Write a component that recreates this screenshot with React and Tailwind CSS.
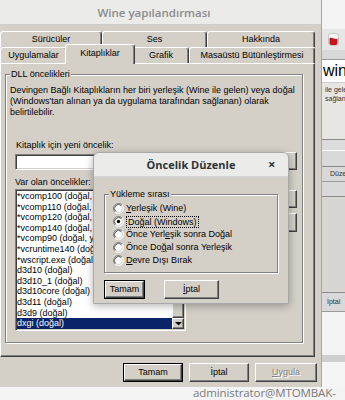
import React from "react";

const RAISED =
  "border-t border-l border-r border-b border-t-white border-l-white border-r-[#404040] border-b-[#404040] shadow-[inset_-1px_-1px_0_#808080]";
const SUNKEN =
  "border border-t-[#808080] border-l-[#808080] border-r-white border-b-white shadow-[inset_1px_1px_0_#404040,inset_-1px_-1px_0_#d4d0c8]";

function Btn({ children, className = "", def = false, disabled = false }) {
  return (
    <div className={`bg-[#d4d0c8] ${def ? "border border-black" : ""} ${className}`}>
      <div className={`w-full h-full flex items-center justify-center ${RAISED}`}>
        <span className={disabled ? "text-[#808080] [text-shadow:1px_1px_0_#ffffff]" : ""}>{children}</span>
      </div>
    </div>
  );
}

function Tab({ w, label, selected = false }) {
  if (selected) {
    return (
      <div
        className={`relative z-10 -mx-[2px] -mb-[1px] h-[20px] bg-[#d4d0c8] flex items-center justify-center pb-[3px] border-t border-l border-r border-t-white border-l-white border-r-[#404040] shadow-[inset_-1px_0_0_#808080] rounded-t-[3px] ${w}`}
      >
        {label}
      </div>
    );
  }
  return (
    <div
      className={`h-full bg-[#d4d0c8] flex items-center justify-center border-t border-l border-r border-t-white border-l-white border-r-[#404040] shadow-[inset_-1px_0_0_#808080] rounded-t-[3px] ${w}`}
    >
      {label}
    </div>
  );
}

function Radio({ checked = false }) {
  return (
    <svg width="11" height="11" viewBox="0 0 12 12" className="shrink-0">
      <circle cx="6" cy="6" r="5" fill="#ffffff" />
      <path d="M2.11 9.89 A5.5 5.5 0 0 1 9.89 2.11" fill="none" stroke="#808080" strokeWidth="1" />
      <path d="M9.89 2.11 A5.5 5.5 0 0 1 2.11 9.89" fill="none" stroke="#ffffff" strokeWidth="1" />
      <path d="M2.82 9.18 A4.5 4.5 0 0 1 9.18 2.82" fill="none" stroke="#404040" strokeWidth="1" />
      <path d="M9.18 2.82 A4.5 4.5 0 0 1 2.82 9.18" fill="none" stroke="#d4d0c8" strokeWidth="1" />
      {checked && <circle cx="6" cy="6" r="1.8" fill="#000000" />}
    </svg>
  );
}

function Arrow({ up = false }) {
  return (
    <div className={`h-[11px] bg-[#d4d0c8] flex items-center justify-center ${RAISED}`}>
      <svg width="7" height="4" viewBox="0 0 7 4">
        {up ? <path d="M0 4 L7 4 L3.5 0.5 Z" fill="#000" /> : <path d="M0 0 L7 0 L3.5 3.5 Z" fill="#000" />}
      </svg>
    </div>
  );
}

const ITEMS = [
  "*vcomp100 (doğal, yerleşik)",
  "*vcomp110 (doğal, yerleşik)",
  "*vcomp120 (doğal, yerleşik)",
  "*vcomp140 (doğal, yerleşik)",
  "*vcomp90 (doğal, yerleşik)",
  "*vcruntime140 (doğal, yerleşik)",
  "*wscript.exe (doğal, yerleşik)",
  "d3d10 (doğal)",
  "d3d10_1 (doğal)",
  "d3d10core (doğal)",
  "d3d11 (doğal)",
  "d3d9 (doğal)",
  "dxgi (doğal)",
];

function ListBox() {
  return (
    <div className={`w-[171px] h-[142px] bg-white p-[1px] flex ${SUNKEN}`}>
      <div className="flex-1 flex flex-col overflow-hidden">
        {ITEMS.map((t, i) => (
          <div
            key={t}
            className={`h-[10.6px] leading-[10.6px] whitespace-nowrap ${
              i === ITEMS.length - 1 ? "bg-[#0a246a] text-white" : ""
            }`}
          >
            {t}
          </div>
        ))}
      </div>
      <div className="w-[12px] flex flex-col">
        <Arrow up />
        <div className={`flex-1 bg-[#d4d0c8] ${RAISED}`} />
        <Arrow />
      </div>
    </div>
  );
}

function MainWindow() {
  return (
    <div className="w-[322px] h-full shrink-0 flex flex-col bg-[#d4d0c8] border-r border-[#a5a5a5]">
      <div className="h-[25px] shrink-0 bg-[#ebebea] border-b border-[#cdcdcd] flex items-center justify-center pr-[13px] font-['Open_Sans',sans-serif] font-semibold text-[11.5px] text-[#8c8c8c]">
        Wine yapılandırması
      </div>
      <div className="flex flex-col pt-[6px]">
        <div className="flex h-[16px] w-[315px]">
          <Tab w="w-[102px]" label="Sürücüler" />
          <Tab w="w-[105px]" label="Ses" />
          <Tab w="w-[108px]" label="Hakkında" />
        </div>
        <div className="flex h-[16px] w-[315px] items-end">
          <Tab w="w-[67px]" label="Uygulamalar" />
          <Tab w="w-[70px]" label="Kitaplıklar" selected />
          <Tab w="w-[56px]" label="Grafik" />
          <Tab w="w-[126px]" label="Masaüstü Bütünleştirmesi" />
        </div>
        <div className={`w-[315px] h-[294px] pl-[4px] pt-[10px] ${RAISED}`}>
          <div className="w-[298px] h-[269px] border border-[#808080] shadow-[inset_1px_1px_0_#ffffff,1px_1px_0_#ffffff] flex flex-col">
            <span className="-mt-[6px] ml-[4px] px-[1px] self-start bg-[#d4d0c8]">DLL öncelikleri</span>
            <p className="mt-[5px] pl-[4px] whitespace-nowrap">
              Devingen Bağlı Kitaplıkların her biri yerleşik (Wine ile gelen) veya doğal
              <br />
              (Windows'tan alınan ya da uygulama tarafından sağlanan) olarak
              <br />
              belirtilebilir.
            </p>
            <p className="mt-[22px] pl-[10px]">Kitaplık için yeni öncelik:</p>
            <div className="mt-[1px] pl-[9px] pr-[5px] h-[18px] flex items-end justify-between">
              <div className={`w-[208px] h-[16px] bg-white ${SUNKEN}`} />
              <Btn className="w-[66px] h-[18px]">Ekle</Btn>
            </div>
            <p className="mt-[7px] pl-[9px]">Var olan öncelikler:</p>
            <div className="mt-[1px] pl-[9px] pr-[5px] flex justify-between items-start">
              <ListBox />
              <div className="mt-[1px] flex flex-col gap-[5px]">
                <Btn className="w-[66px] h-[18px]">Düzenle...</Btn>
                <Btn className="w-[66px] h-[19px]">Kaldır</Btn>
              </div>
            </div>
          </div>
        </div>
        <div className="mt-[6px] h-[19px] flex justify-end gap-[6px] pr-[4px]">
          <Btn def className="w-[60px] h-[19px]">Tamam</Btn>
          <Btn className="w-[60px] h-[19px]">İptal</Btn>
          <Btn disabled className="w-[62px] h-[19px]">
            <span className="underline">U</span>ygula
          </Btn>
        </div>
      </div>
    </div>
  );
}

function WineIcon() {
  return (
    <svg width="11" height="13" viewBox="0 0 11 13">
      <rect x="0.5" y="0.5" width="10" height="12" rx="2.5" fill="#f7f7f7" stroke="#c8c8c8" />
      <path d="M1.5 5 C4 4 7 7 9.5 5.5 L9.5 10 C9.5 11.5 8.5 12 7 12 L4 12 C2.5 12 1.5 11.5 1.5 10 Z" fill="#c4161c" />
    </svg>
  );
}

function BackWindow() {
  return (
    <div className="flex-1 h-full flex flex-col overflow-hidden text-[#333] whitespace-nowrap">
      <div className="h-[29px] bg-[#f4f4f4]" />
      <div className="h-[21px] bg-[#e6e6e6] flex items-center pl-[6px]">
        <WineIcon />
      </div>
      <div className="h-[10px] bg-[#d8d8d8] border-b border-[#9a9a9a]" />
      <div className="h-[22px] bg-white flex items-end pl-[1px] pb-[2px] text-[16px] leading-[18px] text-black">wine</div>
      <div className="h-[57px] bg-[#e7e6e3] border-t border-[#cfcfcf] pt-[2px] pl-[3px] text-[7px] leading-[9px]">
        ile gelen
        <br />
        sağlanan
      </div>
      <div className="h-[11px] bg-[#dcdcdc] border-t border-[#8a8a8a]" />
      <div className="h-[16px] bg-[#d9d9d9] border-t border-white" />
      <div className="h-[15px] bg-[#d9d9d9] border-t border-[#8a8a8a] pl-[8px] text-[7px] leading-[13px]">Düzenle</div>
      <div className="h-[15px] bg-[#d9d9d9] border-t border-[#9a9a9a]" />
      <div className="h-[96px] bg-[#d8d6d2] border-t border-[#8a8a8a]" />
      <div className="h-[19px] bg-[#d9d9d9] border-t border-[#8a8a8a] pl-[5px] text-[7px] leading-[17px]">İptal</div>
      <div className="h-[44px] bg-[#f3f3f3] border-t border-[#9a9a9a]" />
      <div className="h-[7px] bg-[#cfcfcf]" />
      <div className="flex-1 bg-[#f5f5f5]" />
    </div>
  );
}

function Dialog() {
  return (
    <div className="absolute left-[93px] top-[152px] w-[196px] h-[152px] rounded-t-[6px] border border-[#a9a9a9] shadow-[0_2px_8px_rgba(0,0,0,0.3)] bg-[#d4d0c8] flex flex-col overflow-hidden">
      <div className="h-[24px] shrink-0 bg-[#ebebea] border-b border-[#d3d3d3] flex items-center font-['Open_Sans',sans-serif] text-[#2e3436]">
        <span className="w-[26px]" />
        <span className="flex-1 text-center font-bold text-[11px]">Öncelik Düzenle</span>
        <span className="w-[26px] pl-[6px] text-[13px] font-bold leading-[13px]">×</span>
      </div>
      <div className="flex flex-col pl-[10px]">
        <div className="mt-[17px] w-[174px] h-[79px] border border-[#808080] shadow-[inset_1px_1px_0_#ffffff,1px_1px_0_#ffffff] flex flex-col">
          <span className="-mt-[6px] ml-[4px] px-[1px] self-start bg-[#d4d0c8]">Yükleme sırası</span>
          <div className="mt-[2px] pl-[8px] flex flex-col">
            <div className="h-[13px] flex items-center gap-[2px]">
              <Radio />
              <span>
                <span className="underline">Y</span>erleşik (Wine)
              </span>
            </div>
            <div className="h-[13px] flex items-center gap-[2px]">
              <Radio checked />
              <span className="border border-dotted border-black px-[1px] leading-[10px]">
                Do<span className="underline">ğ</span>al (Windows)
              </span>
            </div>
            <div className="h-[13px] flex items-center gap-[2px]">
              <Radio />
              <span>
                Önce Yerl<span className="underline">e</span>şik sonra Doğal
              </span>
            </div>
            <div className="h-[13px] flex items-center gap-[2px]">
              <Radio />
              <span>
                Önce Do<span className="underline">ğ</span>al sonra Yerleşik
              </span>
            </div>
            <div className="h-[13px] flex items-center gap-[2px]">
              <Radio />
              <span>
                <span className="underline">D</span>evre Dışı Bırak
              </span>
            </div>
          </div>
        </div>
        <div className="mt-[7px] flex gap-[19px]">
          <Btn def className="w-[41px] h-[19px]">Tamam</Btn>
          <Btn className="w-[55px] h-[19px]">
            <span className="underline">İ</span>ptal
          </Btn>
        </div>
      </div>
    </div>
  );
}

export default function App() {
  return (
    <div className="relative w-[345px] h-[400px] overflow-hidden bg-[#f4f4f4] font-['Liberation_Sans',Arial,sans-serif] text-[9px] leading-[11px] text-black">
      <div className="flex h-[387px]">
        <MainWindow />
        <BackWindow />
      </div>
      <div className="h-[13px] pl-[193px] font-['Open_Sans',sans-serif] text-[11.5px] leading-[12px] tracking-[-0.1px] text-[#7a7a7a] whitespace-nowrap overflow-hidden">
        administrator@MTOMBAK-
      </div>
      <Dialog />
    </div>
  );
}
